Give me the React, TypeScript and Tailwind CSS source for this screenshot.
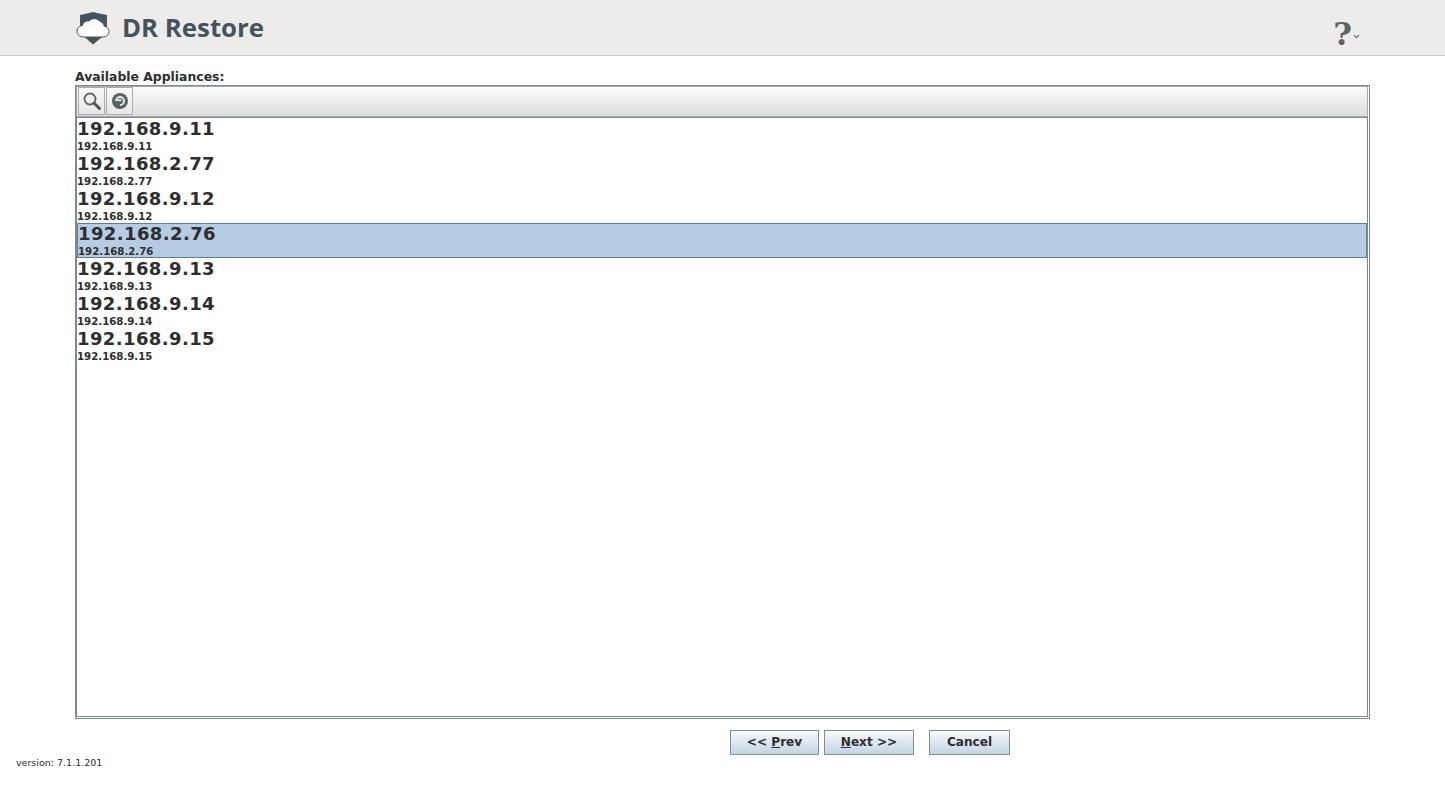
import { ChevronDown } from "lucide-react";

const appliances = [
  "192.168.9.11",
  "192.168.2.77",
  "192.168.9.12",
  "192.168.2.76",
  "192.168.9.13",
  "192.168.9.14",
  "192.168.9.15",
];

const selected = "192.168.2.76";

function Logo() {
  return (
    <svg width="34" height="34" viewBox="0 0 34 34" className="shrink-0">
      <path d="M4 4 L11 2.500 L17 1 L23 2.500 L31 4 L31 22 L17 33.500 L4 22 Z" fill="#43545f" />
      <path
        d="M8 26 C3.500 26 1 23.500 1 20 C1 17 3.500 14.500 6.500 14.500 C7 11 10 9.500 13 10 C15 7 21 6.500 24 10.500 C26.500 11 28 13 28 15 C31 15.500 33 17.500 33 20.500 C33 23.500 30.500 26 27 26 Z"
        fill="#ffffff"
        stroke="#43545f"
        strokeWidth="1"
      />
    </svg>
  );
}

function SearchIcon() {
  return (
    <svg width="20" height="20" viewBox="0 0 20 20">
      <circle cx="8" cy="8" r="5.500" fill="#eef0f0" stroke="#5c6366" strokeWidth="1.800" />
      <path d="M12 12 L17.500 17.500" stroke="#4d5356" strokeWidth="3" strokeLinecap="round" />
    </svg>
  );
}

function RefreshIcon() {
  return (
    <svg width="18" height="18" viewBox="0 0 18 18">
      <circle cx="9" cy="9" r="8" fill="#5a6467" />
      <path d="M5 9 A4 4 0 1 1 9 13" fill="none" stroke="#e8eaea" strokeWidth="1.800" />
      <path d="M5.500 8.200 H10.500" stroke="#e8eaea" strokeWidth="1.800" />
    </svg>
  );
}

function ToolButton({ children }: { children: React.ReactNode }) {
  return (
    <button
      type="button"
      className="flex h-[28px] w-[27px] items-center justify-center border border-[#a9adaf] bg-gradient-to-b from-[#f8f8f8] to-[#e6e7e7]"
    >
      {children}
    </button>
  );
}

function NavButton({ children, width }: { children: React.ReactNode; width: string }) {
  return (
    <button
      type="button"
      className={`h-[25px] ${width} border border-[#7c909f] bg-gradient-to-b from-[#f7fafc] to-[#c3d4e4] text-center font-['DejaVu_Sans',sans-serif] text-[12.100px] font-bold leading-[23px] text-[#2e2e2e]`}
    >
      {children}
    </button>
  );
}

export default function App() {
  return (
    <div className="relative flex h-[790px] w-[1445px] flex-col overflow-hidden bg-white font-['DejaVu_Sans',sans-serif] text-[#2e2e2e]">
      <header className="flex h-[56px] shrink-0 items-center justify-between border-b border-[#c8c8c8] bg-[#edeceb] pl-[76px] pr-[84px]">
        <div className="flex items-center gap-[12px]">
          <Logo />
          <span className="font-['Open_Sans',sans-serif] text-[25.800px] font-bold leading-none text-[#43545f]">
            DR Restore
          </span>
        </div>
        <div className="flex items-end pt-[12px]">
          <span className="font-['DejaVu_Serif',serif] text-[32px] font-bold leading-[36px] text-[#5a6467]">?</span>
          <ChevronDown size={9} strokeWidth={3} className="mb-[11px] text-[#5a6467]" />
        </div>
      </header>

      <main className="flex flex-1 flex-col pl-[75px] pr-[75px]">
        <div className="mt-[13px] h-[16px] text-[12.400px] font-bold leading-[16px]">Available Appliances:</div>
        <div className="flex h-[634px] flex-col border border-[#7b8a94] pb-[1px] pr-[1px]">
          <div className="flex h-[31px] shrink-0 items-start gap-[1px] border border-[#a3a9ad] bg-gradient-to-b from-[#fbfbfb] to-[#dcdddd] pl-[1px]">
            <ToolButton>
              <SearchIcon />
            </ToolButton>
            <ToolButton>
              <RefreshIcon />
            </ToolButton>
          </div>
          <div className="min-h-0 flex-1 border border-[#7b8a94] bg-white">
            {appliances.map((ip) => (
              <div
                key={ip}
                className={
                  ip === selected
                    ? "h-[35px] bg-[#b6cce3] pl-[1px] shadow-[inset_0_0_0_1px_#5f7f97]"
                    : "h-[35px]"
                }
              >
                <div className="h-[23px] text-[18px] font-bold leading-[21px] tracking-[0.4px] whitespace-nowrap">{ip}</div>
                <div className="text-[10.200px] font-bold leading-[12px] whitespace-nowrap">{ip}</div>
              </div>
            ))}
          </div>
        </div>

        <div className="flex-1">
          <div className="ml-[655px] mt-[11px] flex">
            <NavButton width="w-[89px]">
              {"<< "}
              <span className="underline">P</span>rev
            </NavButton>
            <div className="w-[5px]" />
            <NavButton width="w-[90px]">
              <span className="underline">N</span>ext {">>"}
            </NavButton>
            <div className="w-[15px]" />
            <NavButton width="w-[81px]">Cancel</NavButton>
          </div>
        </div>
      </main>

      <div className="absolute left-[16px] top-[756px] text-[9.500px] leading-[13px] text-[#2e2e2e]">version: 7.1.1.201</div>
    </div>
  );
}
